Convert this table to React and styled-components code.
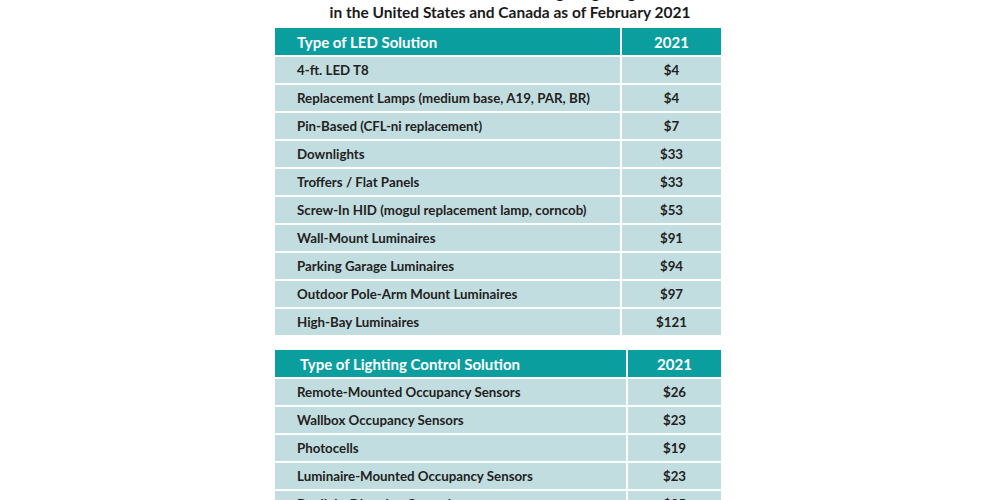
import React from 'react';
import styled, { createGlobalStyle } from 'styled-components';

const GlobalStyle = createGlobalStyle`
  html, body { margin: 0; padding: 0; background: #fff; }
  body { font-family: Lato, "Open Sans", sans-serif; color: #1a1a1a; }
`;

const ledRows = [
  ['4-ft. LED T8', '$4'],
  ['Replacement Lamps (medium base, A19, PAR, BR)', '$4'],
  ['Pin-Based (CFL-ni replacement)', '$7'],
  ['Downlights', '$33'],
  ['Troffers / Flat Panels', '$33'],
  ['Screw-In HID (mogul replacement lamp, corncob)', '$53'],
  ['Wall-Mount Luminaires', '$91'],
  ['Parking Garage Luminaires', '$94'],
  ['Outdoor Pole-Arm Mount Luminaires', '$97'],
  ['High-Bay Luminaires', '$121'],
];

const controlRows = [
  ['Remote-Mounted Occupancy Sensors', '$26'],
  ['Wallbox Occupancy Sensors', '$23'],
  ['Photocells', '$19'],
  ['Luminaire-Mounted Occupancy Sensors', '$23'],
  ['Daylight Dimming Controls', '$25'],
];

const Page = styled.div`
  width: 446px;
  margin-left: 275px;
  overflow: hidden;
  height: 500px;
`;

const Title = styled.h1`
  margin: -19px 0 0 0;
  padding-left: 24px;
  font-size: 15.5px;
  line-height: 20px;
  font-weight: 700;
  text-align: center;
  height: 47px;
  box-sizing: border-box;
  padding-top: 1px;
`;

const Table = styled.div`
  display: grid;
  grid-template-columns: 1fr ${p => p.$valueWidth}px;
  grid-template-rows: 27px;
  grid-auto-rows: 26px;
  gap: 2px;
  background: #fff;
  margin-bottom: ${p => p.$spacing || 0}px;
`;

const HeadCell = styled.div`
  background: #0a9e9f;
  color: #fff;
  font-weight: 700;
  font-size: 15px;
  display: flex;
  align-items: center;
  justify-content: ${p => (p.$center ? 'center' : 'flex-start')};
  padding-left: ${p => (p.$center ? 0 : p.$indent || 22)}px;
`;

const Cell = styled.div`
  background: #c2dddf;
  font-size: 13.3px;
  font-weight: 700;
  color: #222;
  display: flex;
  align-items: center;
  justify-content: ${p => (p.$center ? 'center' : 'flex-start')};
  padding-left: ${p => (p.$center ? 0 : 22)}px;
  white-space: nowrap;
`;

function PriceTable({ heading, rows, valueWidth, spacing, indent }) {
  return (
    <Table $valueWidth={valueWidth} $spacing={spacing}>
      <HeadCell $indent={indent}>{heading}</HeadCell>
      <HeadCell $center>2021</HeadCell>
      {rows.map(([name, price]) => (
        <React.Fragment key={name}>
          <Cell>{name}</Cell>
          <Cell $center>{price}</Cell>
        </React.Fragment>
      ))}
    </Table>
  );
}

export default function App() {
  return (
    <>
      <GlobalStyle />
      <Page>
        <Title>
          Median Incentive Levels for Lighting Programs
          <br />
          in the United States and Canada as of February 2021
        </Title>
        <PriceTable heading="Type of LED Solution" rows={ledRows} valueWidth={99} spacing={15} />
        <PriceTable heading="Type of Lighting Control Solution" rows={controlRows} valueWidth={93} indent={25} />
      </Page>
    </>
  );
}
